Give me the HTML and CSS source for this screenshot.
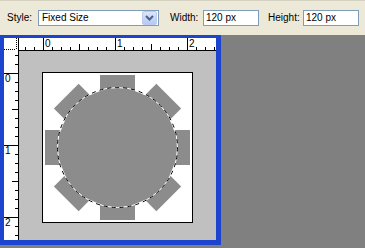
FILE: index.html
```html
<!DOCTYPE html>
<html>
<head>
    <meta charset="utf-8" />
    <title>Fixed Size Selection</title>
    <link rel="stylesheet" href="styles.css">
</head>
<body>
    <div class="toolbar">
        <span class="lbl lbl-style">Style:</span>
        <div class="select">
            <span class="select-text">Fixed Size</span>
            <span class="drop">
                <svg width="9" height="6" viewBox="0 0 9 6"><path d="M1 1 L4.5 4.5 L8 1" fill="none" stroke="#4d6185" stroke-width="2"/></svg>
            </span>
        </div>
        <span class="lbl lbl-w">Width:</span>
        <div class="field">120 px</div>
        <span class="lbl lbl-h">Height:</span>
        <div class="field">120 px</div>
    </div>

    <div class="work">
        <div class="win">
            <div class="rulers">
                <div class="corner"></div>
                <div class="hruler">
                    <span class="num" style="left:26px">0</span>
                    <span class="num" style="left:98px">1</span>
                    <span class="num" style="left:170px">2</span>
                </div>
                <div class="vruler">
                    <span class="num" style="top:23px">0</span>
                    <span class="num" style="top:95px">1</span>
                    <span class="num" style="top:167px">2</span>
                </div>
                <div class="canvas">
                    <svg width="197" height="189" viewBox="0 0 197 189">
                        <rect x="23.5" y="21.5" width="150" height="150" fill="#fff" stroke="#000"/>
                        <g transform="translate(98.5 96.5)" fill="#8c8c8c">
                            <rect x="-72.5" y="-17.5" width="145" height="35"/>
                            <rect x="-72.5" y="-17.5" width="145" height="35" transform="rotate(45)"/>
                            <rect x="-72.5" y="-17.5" width="145" height="35" transform="rotate(90)"/>
                            <rect x="-72.5" y="-17.5" width="145" height="35" transform="rotate(135)"/>
                            <circle r="59"/>
                            <circle r="60" fill="none" stroke="#fff"/>
                            <circle r="60" fill="none" stroke="#000" stroke-dasharray="4 4"/>
                        </g>
                    </svg>
                </div>
            </div>
        </div>
        <div class="rest"></div>
    </div>
</body>
</html>
```

FILE: styles.css
```css
body {
    margin: 0;
    padding: 0;
    background: #808080;
    font: 10px/16px "Liberation Sans", Arial, sans-serif;
    color: #000;
}

.toolbar {
    display: flex;
    align-items: flex-start;
    height: 35px;
    box-sizing: border-box;
    padding: 9px 0 0 7px;
    background: #ece9d8;
    border-top: 1px solid #d6d2c2;
}

.lbl {
    display: block;
    height: 16px;
}

.lbl-style {
    width: 31px;
}

.lbl-w {
    width: 33px;
    margin-left: 11px;
}

.lbl-h {
    width: 35px;
    margin-left: 9px;
}

.select {
    display: flex;
    justify-content: space-between;
    width: 121px;
    height: 16px;
    box-sizing: border-box;
    border: 1px solid #7f9db9;
    background: #fff;
    padding: 0 1px 0 3px;
    line-height: 14px;
}

.drop {
    display: flex;
    align-items: center;
    justify-content: center;
    width: 15px;
    height: 14px;
    box-sizing: border-box;
    border: 1px solid #bccbef;
    border-radius: 2px;
    background: linear-gradient(#dbe5fb, #b6c9f5);
}

.field {
    width: 56px;
    height: 16px;
    box-sizing: border-box;
    border: 1px solid #7f9db9;
    background: #fff;
    padding-left: 2px;
    line-height: 14px;
}

.work {
    display: flex;
    height: 213px;
}

.win {
    width: 221px;
    height: 210px;
    box-sizing: border-box;
    border-style: solid;
    border-color: #1c44cf;
    border-width: 3px 5px 5px 4px;
    box-shadow: inset 1px 1px 0 #5b82ec, inset -1px -1px 0 #7a9cf2;
}

.rulers {
    display: grid;
    grid-template-columns: 15px 1fr;
    grid-template-rows: 13px 1fr;
    height: 100%;
}

.corner {
    box-sizing: border-box;
    border-right: 1px solid #000;
    background:
        repeating-linear-gradient(to bottom, #000 0 1px, transparent 1px 2px) 12px 0 / 1px 12px no-repeat,
        repeating-linear-gradient(to right, #000 0 1px, transparent 1px 2px) 0 11px / 12px 1px no-repeat,
        #fff;
}

.hruler {
    position: relative;
    box-sizing: border-box;
    border-bottom: 1px solid #000;
    background:
        linear-gradient(to right, #000 1px, transparent 1px) 24px 0 / 72px 100% repeat-x,
        linear-gradient(to right, #000 1px, transparent 1px) 24px 100% / 36px 6px repeat-x,
        linear-gradient(to right, #000 1px, transparent 1px) 24px 100% / 9px 3px repeat-x,
        #fff;
}

.vruler {
    position: relative;
    box-sizing: border-box;
    border-right: 1px solid #000;
    background:
        linear-gradient(#000 1px, transparent 1px) 0 22px / 100% 72px repeat-y,
        linear-gradient(#000 1px, transparent 1px) 100% 22px / 6px 36px repeat-y,
        linear-gradient(#000 1px, transparent 1px) 100% 22px / 3px 9px repeat-y,
        #fff;
}

.num {
    position: absolute;
    font: 10px/10px "Liberation Sans", Arial, sans-serif;
}

.hruler .num {
    top: 1px;
}

.vruler .num {
    left: 1px;
}

.canvas {
    background: #c0c0c0;
    overflow: hidden;
}

.canvas svg {
    display: block;
}

.rest {
    flex: 1;
    background: #808080;
}
```
